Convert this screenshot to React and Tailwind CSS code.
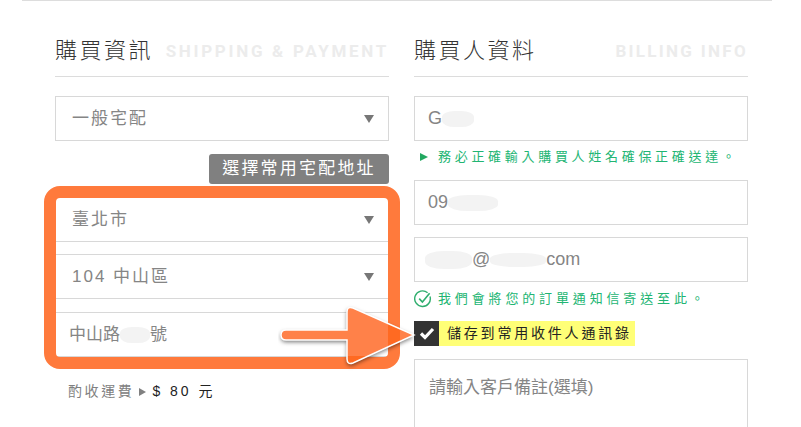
import React from "react";

const cjk = "font-['Liberation_Sans','Noto_Sans_CJK_TC',sans-serif]";

// Dropdown with the little gray caret on the right
const SelectBox = ({ children }) => (
  <div className="flex h-[45px] items-center justify-between border border-[#d8d8d8] bg-white pl-4 pr-[14px] text-[17px] tracking-[2px] text-[#858585]">
    <span>{children}</span>
    <span className="h-0 w-0 border-x-[5px] border-t-[8px] border-x-transparent border-t-[#777777]" />
  </div>
);

const InputBox = ({ children, className = "pl-[13px]" }) => (
  <div className={`flex h-[45px] items-center border border-[#d8d8d8] bg-white text-[18px] text-[#858585] ${className}`}>
    {children}
  </div>
);

// Blurred patch that hides personal data in the screenshot
const Smudge = ({ className }) => (
  <span className={`inline-block rounded-[40%] bg-[#f3f3f3] ${className}`} />
);

const SectionTitle = ({ title, sub, subClass }) => (
  <div className="flex h-[76px] items-end justify-between border-b border-[#dcdcdc] pb-[13px]">
    <h2 className="text-[22px] leading-[24px] font-light tracking-[2.5px] text-[#333333]">{title}</h2>
    <span className={`pb-[2px] font-['Roboto',sans-serif] text-[17px] leading-[20px] font-bold text-[#ececec] ${subClass}`}>
      {sub}
    </span>
  </div>
);

const arrowPath = "M8 27 H69 V9 Q69 3 75 5 L136 32 L75 60 Q69 62 69 56 V37 H8 Q3 37 3 32 Q3 27 8 27 Z";

const Arrow = () => (
  <svg className="absolute left-[278px] top-[303px]" width="142" height="68" viewBox="0 0 142 68">
    <defs>
      <filter id="arrowShadow" x="-10%" y="-20%" width="120%" height="150%">
        <feDropShadow dx="0" dy="2" stdDeviation="2" floodColor="#000000" floodOpacity="0.55" />
      </filter>
      <clipPath id="arrowClip">
        <path d={arrowPath} />
      </clipPath>
    </defs>
    <path d={arrowPath} fill="#ff8148" filter="url(#arrowShadow)" />
    {/* darker where the see-through arrow crosses the orange frame */}
    <g clipPath="url(#arrowClip)" fill="#ff6a22">
      <rect x="110" y="0" width="12" height="66" />
      <rect x="60" y="53" width="62" height="13" />
    </g>
    <path d={arrowPath} fill="none" stroke="#ffffff" strokeWidth="1.5" />
  </svg>
);

export default function App() {
  return (
    <div className={`relative h-[427px] w-[801px] overflow-hidden bg-white ${cjk}`}>
      <div className="ml-[22px] h-px w-[750px] bg-[#dddddd]" />

      <div className="mx-[53px] flex gap-[25px]">
        {/* Left column: shipping */}
        <div className="ml-[2px] w-[334px]">
          <SectionTitle title="購買資訊" sub="SHIPPING & PAYMENT" subClass="tracking-[2.7px]" />
          <div className="mt-[19px]">
            <SelectBox>一般宅配</SelectBox>
          </div>
          <div className="mt-[13px] flex justify-end">
            <button className="h-[30px] w-[180px] rounded-[3px] bg-[#808080] text-[17px] tracking-[2.2px] text-white">
              選擇常用宅配地址
            </button>
          </div>
          <div className="mt-[13px]">
            <SelectBox>臺北市</SelectBox>
          </div>
          <div className="mt-[12px]">
            <SelectBox>104 中山區</SelectBox>
          </div>
          <div className="mt-[13px] flex h-[45px] items-center border border-[#d8d8d8] bg-white pl-[13px] text-[17px] text-[#858585]">
            中山路
            <Smudge className="h-[16px] w-[30px]" />
            號
          </div>
          <div className="mt-[24px] flex items-center pl-[13px] text-[14px] tracking-[2.6px] text-[#808080]">
            酌收運費
            <span className="ml-[5px] mr-[6px] h-0 w-0 border-y-[4px] border-l-[7px] border-y-transparent border-l-[#808080]" />
            <span className="tracking-[3px] text-[#222222]">$ 80 元</span>
          </div>
        </div>

        {/* Right column: buyer */}
        <div className="w-[334px]">
          <SectionTitle title="購買人資料" sub="BILLING INFO" subClass="tracking-[2.3px]" />
          <div className="mt-[19px]">
            <InputBox>
              G
              <Smudge className="h-[16px] w-[32px]" />
            </InputBox>
          </div>
          <div className="mt-[4px] flex h-[24px] items-center pl-[6px] text-[13px] tracking-[3.7px] text-[#22b573]">
            <span className="mr-[10px] h-0 w-0 border-y-[4px] border-l-[8px] border-y-transparent border-l-[#22a860]" />
            務必正確輸入購買人姓名確保正確送達。
          </div>
          <div className="mt-[11px]">
            <InputBox>
              09
              <Smudge className="h-[16px] w-[50px]" />
            </InputBox>
          </div>
          <div className="mt-[12px]">
            <InputBox className="pl-[10px]">
              <Smudge className="h-[18px] w-[47px]" />
              @
              <Smudge className="h-[14px] w-[56px]" />
              com
            </InputBox>
          </div>
          <div className="mt-[5px] flex h-[24px] items-center text-[13px] tracking-[3.85px] text-[#22b573]">
            <svg className="mr-[6px]" width="18" height="18" viewBox="0 0 18 18" fill="none" stroke="#2fae6e" strokeWidth="1.4">
              <path d="M16 6.5 A7.8 7.8 0 1 1 13.6 2.8" />
              <path d="M5.2 8.6 L8.4 12 L15.6 3.2" strokeWidth="1.6" />
            </svg>
            我們會將您的訂單通知信寄送至此。
          </div>
          <div className="mt-[10px] flex h-[25px] w-[221px] items-center bg-[#ffff77]">
            <span className="flex h-[25px] w-[25px] items-center justify-center bg-[#333333]">
              <svg width="16" height="13" viewBox="0 0 16 13" fill="none" stroke="#ffffff" strokeWidth="3.2">
                <path d="M2 6.5 L6 10.5 L14 2" />
              </svg>
            </span>
            <span className="ml-[8px] text-[14px] tracking-[2.8px] text-[#222222]">儲存到常用收件人通訊錄</span>
          </div>
          <div className="mt-[13px] h-[100px] border border-[#d8d8d8] bg-white pl-[14px] pt-[16px] text-[17px] leading-[24px] text-[#858585]">
            請輸入客戶備註(選填)
          </div>
        </div>
      </div>

      {/* Annotation drawn over the page */}
      <div className="pointer-events-none absolute left-[44px] top-[186px] h-[183px] w-[356px] rounded-[16px] border-[12px] border-[#ff7a3c]" />
      <Arrow />
    </div>
  );
}
